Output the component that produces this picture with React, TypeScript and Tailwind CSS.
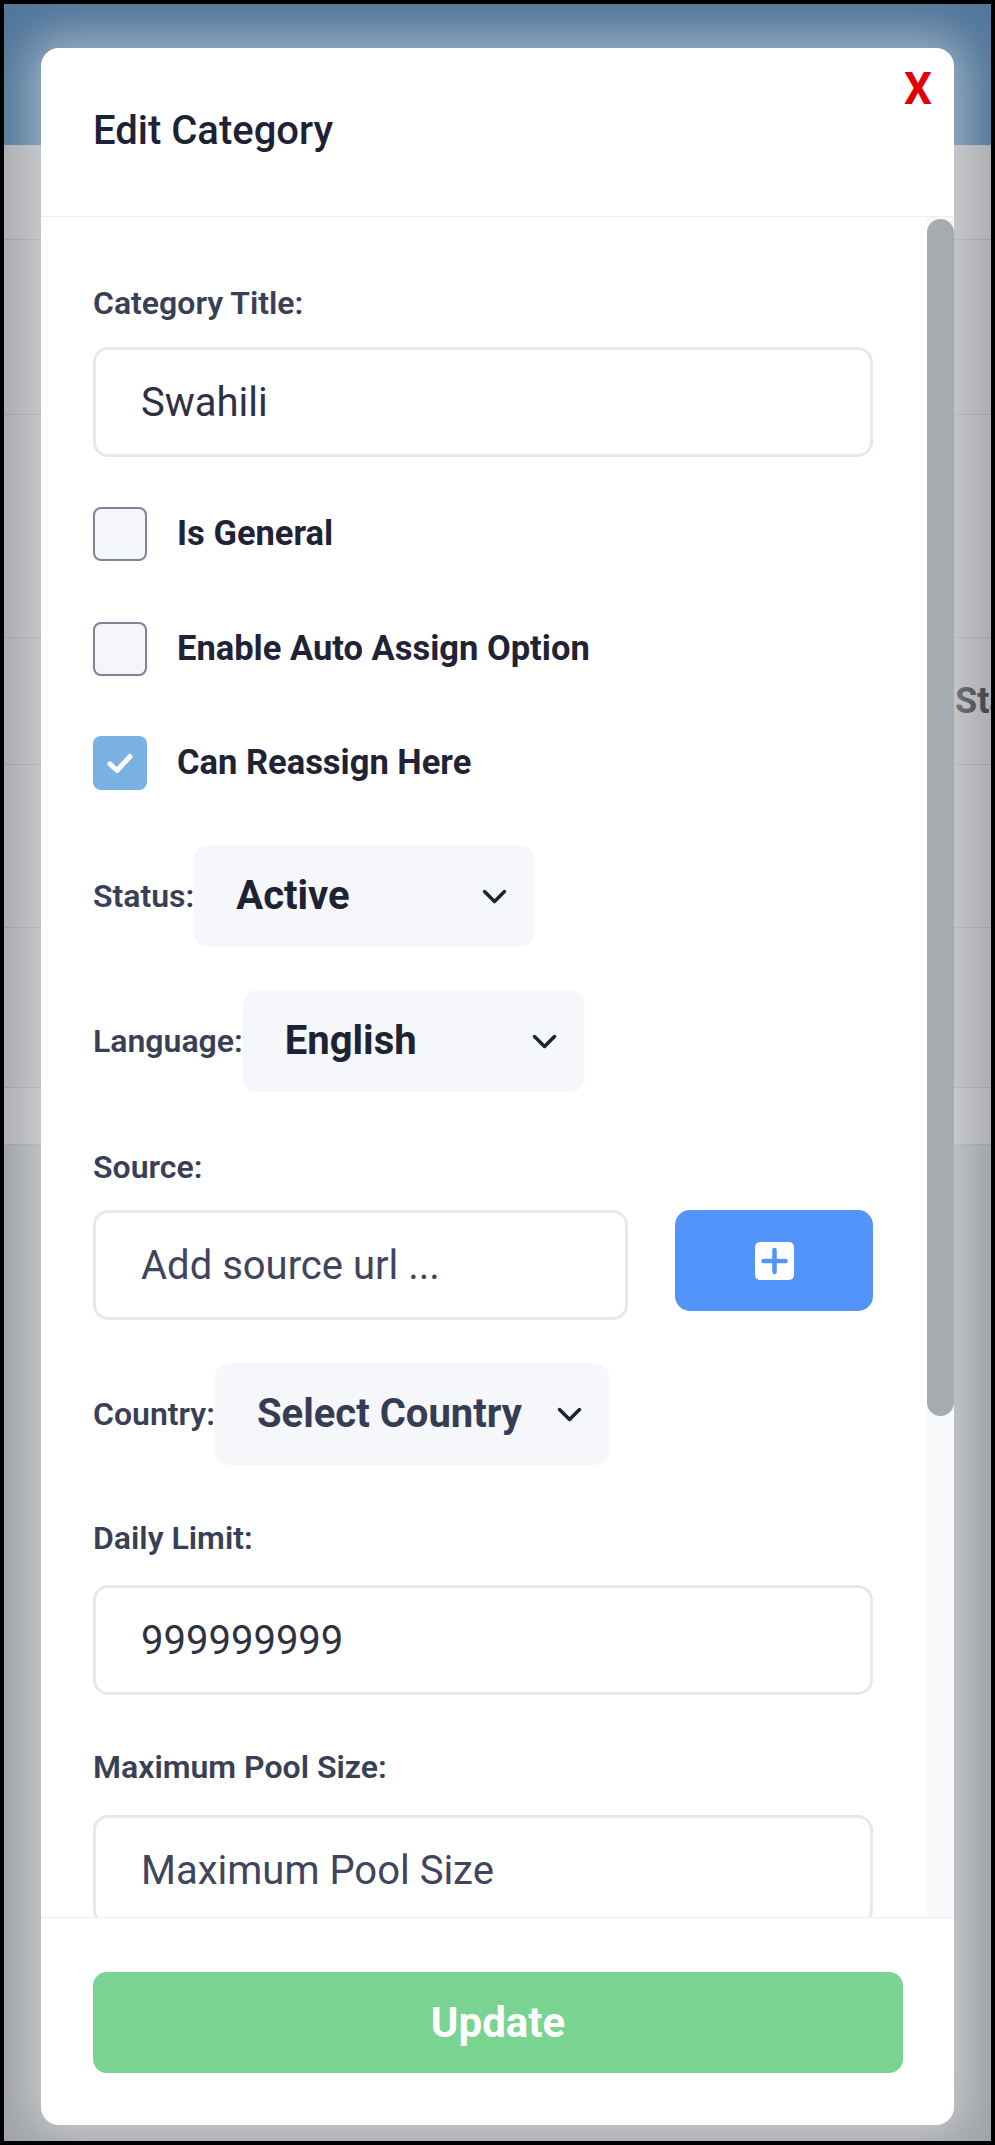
import React from "react";

const ROWS = [
  { h: "h-[95px]", bg: "bg-[#abadb1]" },
  { h: "h-[175px]", bg: "bg-[#a8aaae]" },
  { h: "h-[223px]", bg: "bg-[#a8aaae]" },
  { h: "h-[127px]", bg: "bg-[#a8aaae]", text: "Status" },
  { h: "h-[163px]", bg: "bg-[#a8aaae]" },
  { h: "h-[160px]", bg: "bg-[#a8aaae]" },
  { h: "h-[57px]", bg: "bg-[#acaeb2]" },
];

export default function App() {
  return (
    <div className="h-[2145px] w-[995px] overflow-hidden bg-black p-[4px] font-[Roboto,sans-serif]">
      <div className="relative h-full w-full overflow-hidden bg-[#9fa2a6]">
        <BackgroundPage />
        <EditCategoryModal />
      </div>
    </div>
  );
}

function BackgroundPage() {
  return (
    <div className="flex flex-col">
      <div className="h-[141px] bg-[#52779a]" />
      {ROWS.map((r, i) => (
        <div
          key={i}
          className={`flex items-center border-b border-[#96999d] ${r.h} ${r.bg}`}
        >
          {r.text && (
            <span className="whitespace-nowrap pl-[951px] text-[36px] font-bold text-[#35383d]">
              {r.text}
            </span>
          )}
        </div>
      ))}
    </div>
  );
}

function EditCategoryModal() {
  return (
    <div className="absolute left-[37px] top-[44px] flex h-[2077px] w-[913px] flex-col overflow-hidden rounded-[18px] bg-white shadow-[0_0_45px_12px_rgba(255,255,255,0.45)]">
      <button className="absolute right-[22px] top-[19px] text-[44px] leading-none font-bold text-[#e30000]">
        X
      </button>

      <header className="flex h-[169px] shrink-0 items-center border-b border-[#eceef3] pb-[2px] pl-[52px]">
        <h1 className="text-[40px] font-medium text-[#1e2235]">Edit Category</h1>
      </header>

      {/* scrolling body, clipped like the original */}
      <div className="flex h-[1700px] shrink-0 overflow-hidden">
        <div className="flex flex-1 flex-col pl-[52px] pr-[54px] pt-[68px]">
          <Label>Category Title:</Label>
          <TextInput className="mt-[26px]" value="Swahili" />

          <Check className="mt-[50px]" label="Is General" />
          <Check className="mt-[61px]" label="Enable Auto Assign Option" />
          <Check className="mt-[60px]" label="Can Reassign Here" checked />

          <div className="mt-[55px] flex shrink-0 items-center">
            <Label>Status:</Label>
            <Select value="Active" width="w-[340px]" />
          </div>
          <div className="mt-[43px] flex shrink-0 items-center">
            <Label>Language:</Label>
            <Select value="English" width="w-[341px]" />
          </div>

          <Label className="mt-[57px]">Source:</Label>
          <div className="mt-[25px] flex shrink-0 items-start gap-[47px]">
            <div className="w-[535px] shrink-0">
              <TextInput placeholder="Add source url ..." />
            </div>
            <button className="flex h-[101px] w-[198px] shrink-0 items-center justify-center rounded-[15px] bg-[#5294fa]">
              <PlusSquare />
            </button>
          </div>

          <div className="mt-[43px] flex shrink-0 items-center">
            <Label>Country:</Label>
            <Select value="Select Country" width="w-[394px]" muted />
          </div>

          <Label className="mt-[55px]">Daily Limit:</Label>
          <TextInput className="mt-[29px]" value="999999999" />

          <Label className="mt-[54px]">Maximum Pool Size:</Label>
          <TextInput className="mt-[30px]" placeholder="Maximum Pool Size" />
        </div>

        <div className="flex w-[27px] shrink-0 flex-col bg-[#f7f8fa]">
          <div className="mt-[2px] h-[1197px] rounded-full bg-[#a6aab1]" />
        </div>
      </div>

      <footer className="flex flex-1 flex-col border-t border-[#eceef3] pl-[52px] pr-[51px] pt-[54px]">
        <button className="h-[101px] w-full rounded-[14px] bg-[#79d491] text-[42px] font-bold text-white">
          Update
        </button>
      </footer>
    </div>
  );
}

function Label({
  children,
  className = "",
}: {
  children: React.ReactNode;
  className?: string;
}) {
  return (
    <label
      className={`block shrink-0 whitespace-nowrap text-[32px] leading-[36px] font-semibold text-[#394056] ${className}`}
    >
      {children}
    </label>
  );
}

function TextInput({
  value,
  placeholder,
  className = "",
}: {
  value?: string;
  placeholder?: string;
  className?: string;
}) {
  return (
    <input
      readOnly
      value={value ?? ""}
      placeholder={placeholder}
      className={`h-[110px] w-full shrink-0 rounded-[15px] border-[3px] border-[#e6e8f1] bg-white pl-[45px] text-[40px] text-[#2d3142] outline-none placeholder:text-[#3f455c] ${className}`}
    />
  );
}

function Check({
  label,
  checked = false,
  className = "",
}: {
  label: string;
  checked?: boolean;
  className?: string;
}) {
  return (
    <div className={`flex shrink-0 items-center gap-[30px] ${className}`}>
      {checked ? (
        <span className="flex h-[54px] w-[54px] items-center justify-center rounded-[8px] bg-[#78b1e2]">
          <svg width="26" height="21" viewBox="0 0 26 21" fill="none">
            <path
              d="M3 11 L10 17.5 L23 3.5"
              stroke="white"
              strokeWidth="5"
              strokeLinecap="round"
              strokeLinejoin="round"
            />
          </svg>
        </span>
      ) : (
        <span className="h-[54px] w-[54px] rounded-[8px] border-2 border-[#7f8396] bg-[#f5f6f9]" />
      )}
      <span className="text-[34.5px] font-bold text-[#1f2335]">{label}</span>
    </div>
  );
}

function Select({
  value,
  width,
  muted = false,
}: {
  value: string;
  width: string;
  muted?: boolean;
}) {
  return (
    <div
      className={`flex h-[102px] shrink-0 items-center justify-between rounded-[14px] bg-[#f6f7fb] pl-[42px] pr-[27px] ${width}`}
    >
      <span
        className={`whitespace-nowrap text-[40px] font-bold ${muted ? "text-[#363c54]" : "text-[#1e2235]"}`}
      >
        {value}
      </span>
      <svg width="25" height="15" viewBox="0 0 25 15" fill="none">
        <path
          d="M2.5 2.5 L12.5 12.5 L22.5 2.5"
          stroke="#1e2235"
          strokeWidth="3.5"
          strokeLinecap="round"
          strokeLinejoin="round"
        />
      </svg>
    </div>
  );
}

function PlusSquare() {
  return (
    <svg width="39" height="38" viewBox="0 0 39 38">
      <rect x="0" y="0" width="39" height="38" rx="5" fill="white" />
      <path
        d="M19.5 8 V30 M8.5 19 H30.5"
        stroke="#5294fa"
        strokeWidth="4.5"
        strokeLinecap="round"
      />
    </svg>
  );
}
